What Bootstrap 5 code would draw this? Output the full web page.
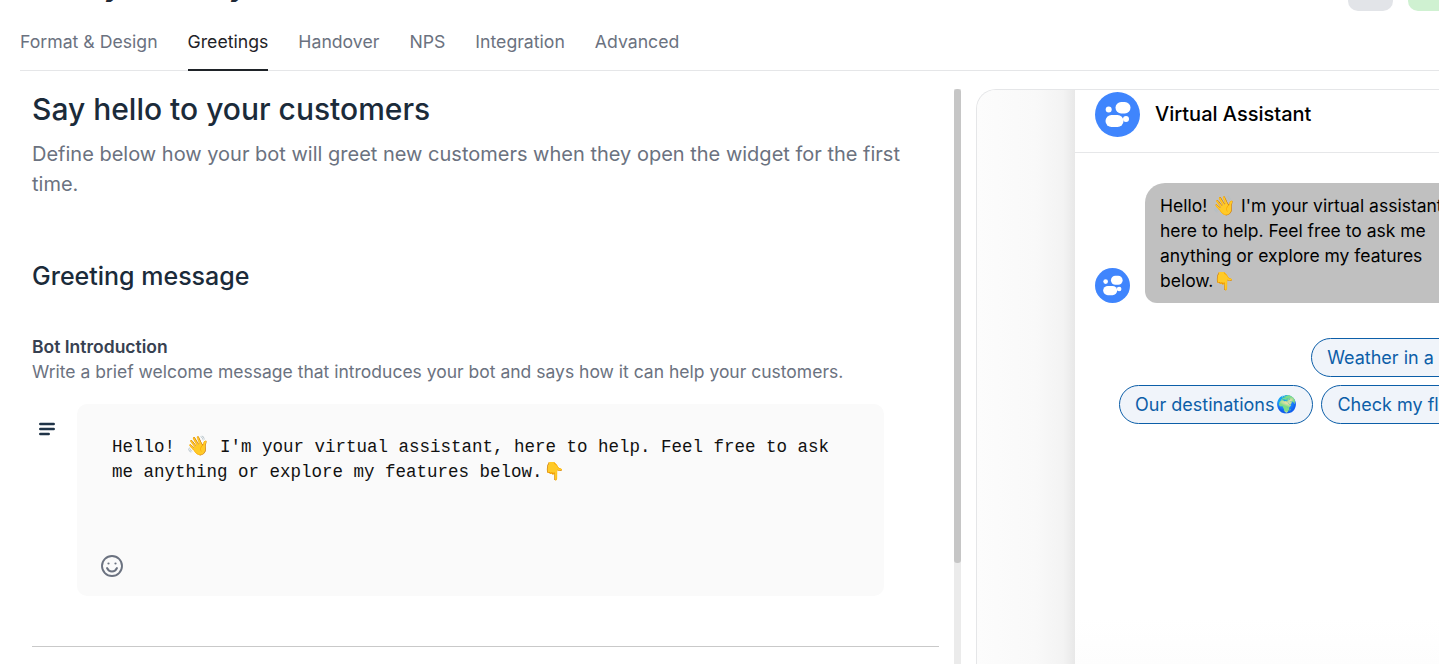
<!DOCTYPE html>
<html lang="en">
<head>
  <meta charset="UTF-8">
  <meta name="viewport" content="width=device-width, initial-scale=1.0">
  <title>Greetings</title>
  <link href="https://cdn.jsdelivr.net/npm/bootstrap@5.3.3/dist/css/bootstrap.min.css" rel="stylesheet">
  <style>
    html, body { height: 664px; overflow: hidden; }
    body { font-family: Inter, "Liberation Sans", sans-serif; color: #1b2b3a; background: #fff; }
    .page-head { height: 11px; overflow: hidden; padding-left: 27px; }
    .page-title { font-size: 30px; line-height: 36px; margin-top: -33px; font-weight: 600; color: #1f2937; white-space: nowrap; }
    .head-btn { width: 45px; height: 30px; margin-top: -19px; border-radius: 10px; background: #e2e4e8; }
    .head-btn-green { width: 60px; margin-left: 15px; margin-right: -29px; background: #cff1d1; }
    .tab-bar { margin: 11px 0 0 20px; height: 49px; border-bottom: 1px solid #e5e6e8; gap: 30px; }
    .tab-item { font-size: 17.67px; line-height: 24px; padding-top: 8px; height: 49px; color: #6b7280; }
    .tab-item.active { color: #1f2328; border-bottom: 2px solid #1f2328; }
    .main-area { height: 620px; }
    .left-pane { width: 954px; flex: none; padding: 18px 15px 0 32px; }
    .big-title { font-size: 30px; line-height: 40px; font-weight: 500; color: #1b2b3a; margin: 0; }
    .sub-text { font-size: 20px; line-height: 30px; color: #6b7280; margin: 10px 0 0; width: 880px; }
    .section-title { font-size: 25px; line-height: 32px; font-weight: 500; color: #1b2b3a; margin: 61px 0 0; }
    .field-label { font-size: 17.5px; line-height: 25px; font-weight: 600; color: #374151; margin-top: 42px; }
    .field-hint { font-size: 17.5px; line-height: 25px; color: #6b7280; }
    .editor-row { margin-top: 20px; }
    .lines-icon { width: 45px; flex: none; padding: 18px 0 0 7px; line-height: 0; }
    .editor-box { width: 807px; height: 192px; background: #fafafa; border-radius: 10px; padding: 31px 35px 0; position: relative; }
    .editor-text { font-family: "Liberation Mono", monospace; font-size: 17.5px; line-height: 25px; color: #111; }
    .emoji-big { font-size: 19px; line-height: 1; }
    .smile-icon { position: absolute; left: 23px; bottom: 18px; }
    .pane-rule { border-top: 1px solid #c9c9c9; margin-top: 50px; width: 907px; }
    .scroll-track { width: 7px; flex: none; margin-top: 18px; background: #ebebeb; }
    .scroll-thumb { height: 474px; background: #c6c6c6; border-radius: 3px; }
    .preview-frame { margin: 18px 0 0 15px; flex: 1; border: 1px solid #e5e6e8; border-right: 0; border-radius: 20px 0 0 0; display: flex; overflow: hidden; background: #fafafa; }
    .preview-side { width: 98px; flex: none; background: linear-gradient(90deg, #fcfcfc 0%, #f9f9f9 60%, #f3f3f3 88%, #e8e8e8 100%); }
    .preview-chat { flex: 1; background: linear-gradient(180deg, #fff 88%, #fcfcfc 100%); }
    .chat-head { height: 63px; border-bottom: 1px solid #e6e7e9; padding: 2px 0 16px 20px; gap: 15px; }
    .chat-name { font-size: 20px; color: #000; font-weight: 500; }
    .chat-body { padding: 30px 0 0 20px; width: 420px; }
    .bubble { width: 330px; margin-left: 15px; padding: 10px 15px; background: #c0c0c0; border-radius: 20px 20px 20px 12px; font-size: 17.5px; line-height: 25px; color: #000; }
    .reply-row { gap: 8px; }
    .reply-row-first { width: 418px; margin-top: 35px; }
    .reply-row-second { margin: 8px 0 0 24px; width: 420px; }
    .reply-btn { height: 39px; padding: 0 15px; border: 1px solid #0c5ea8; border-radius: 20px; background: #f0f4fa; color: #0c5ea8; font-size: 18px; white-space: nowrap; display: flex; align-items: center; }
    .globe-emoji { font-size: 17px; margin-left: 2px; }
  </style>
</head>
<body>
  <div class="d-flex page-head justify-content-between">
    <div class="page-title">Handy Friendly</div>
    <div class="d-flex">
      <div class="head-btn"></div>
      <div class="head-btn head-btn-green"></div>
    </div>
  </div>

  <div class="d-flex tab-bar">
    <div class="tab-item">Format &amp; Design</div>
    <div class="tab-item active">Greetings</div>
    <div class="tab-item">Handover</div>
    <div class="tab-item">NPS</div>
    <div class="tab-item">Integration</div>
    <div class="tab-item">Advanced</div>
  </div>

  <div class="d-flex main-area">
    <div class="left-pane">
      <h1 class="big-title">Say hello to your customers</h1>
      <p class="sub-text">Define below how your bot will greet new customers when they open the widget for the first time.</p>
      <h2 class="section-title">Greeting message</h2>
      <div class="field-label">Bot Introduction</div>
      <div class="field-hint">Write a brief welcome message that introduces your bot and says how it can help your customers.</div>
      <div class="d-flex editor-row">
        <div class="lines-icon">
          <svg width="16" height="14" viewBox="0 0 16 14"><path d="M1.300 2h13.400M1.300 7h13.400M1.300 12h8.400" stroke="#1f3347" stroke-width="2.500" stroke-linecap="round" fill="none"/></svg>
        </div>
        <div class="editor-box">
          <div class="editor-text">Hello! <span class="emoji-big">👋</span> I'm your virtual assistant, here to help. Feel free to ask me anything or explore my features below.👇</div>
          <svg class="smile-icon" width="24" height="24" viewBox="0 0 24 24" fill="none" stroke="#6b7280" stroke-width="1.900"><circle cx="12" cy="12" r="10"/><path d="M7 14c1 2.300 2.800 3.500 5 3.500s4-1.200 5-3.500" stroke-linecap="round"/><circle cx="8.500" cy="9.500" r="1.100" fill="#6b7280" stroke="none"/><circle cx="15.500" cy="9.500" r="1.100" fill="#6b7280" stroke="none"/></svg>
        </div>
      </div>
      <div class="pane-rule"></div>
    </div>
    <div class="scroll-track"><div class="scroll-thumb"></div></div>
    <div class="preview-frame">
      <div class="preview-side"></div>
      <div class="preview-chat">
        <div class="d-flex align-items-center chat-head">
          <svg width="45" height="45" viewBox="0 0 45 45"><circle cx="22.500" cy="22.500" r="22.500" fill="#3f85fd"/><rect x="20.500" y="10" width="15" height="11.500" rx="5.700" fill="#fff"/><rect x="10.500" y="23" width="18" height="12" rx="6" fill="#fff"/><circle cx="13.700" cy="17.500" r="3" fill="#fff"/><circle cx="31" cy="27" r="3" fill="#fff"/></svg>
          <span class="chat-name">Virtual Assistant</span>
        </div>
        <div class="chat-body">
          <div class="d-flex align-items-end">
            <svg class="flex-shrink-0" width="35" height="35" viewBox="0 0 45 45"><circle cx="22.500" cy="22.500" r="22.500" fill="#3f85fd"/><rect x="20.500" y="10" width="15" height="11.500" rx="5.700" fill="#fff"/><rect x="10.500" y="23" width="18" height="12" rx="6" fill="#fff"/><circle cx="13.700" cy="17.500" r="3" fill="#fff"/><circle cx="31" cy="27" r="3" fill="#fff"/></svg>
            <div class="bubble">Hello! <span class="emoji-big">👋</span> I'm your virtual assistant, here to help. Feel free to ask me anything or explore my features below.👇</div>
          </div>
          <div class="d-flex reply-row reply-row-first justify-content-end"><div class="reply-btn">Weather in a city ☀️</div></div>
          <div class="d-flex reply-row reply-row-second"><div class="reply-btn">Our destinations<span class="globe-emoji">🌍</span></div><div class="reply-btn">Check my flight</div></div>
        </div>
      </div>
    </div>
  </div>
  <script src="https://cdn.jsdelivr.net/npm/bootstrap@5.3.3/dist/js/bootstrap.bundle.min.js"></script>
</body>
</html>
